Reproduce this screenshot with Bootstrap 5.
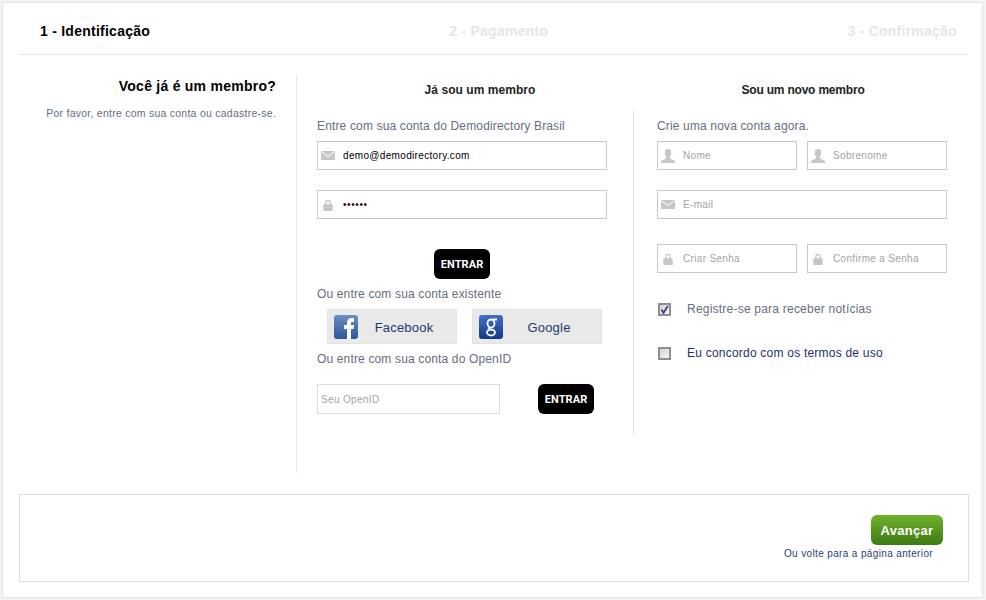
<!DOCTYPE html>
<html lang="pt-BR">
<head>
<meta charset="utf-8">
<title>Identificação</title>
<link href="https://cdn.jsdelivr.net/npm/bootstrap@5.3.0/dist/css/bootstrap.min.css" rel="stylesheet">
<style>
html,body{height:600px;overflow:hidden}
body{background:#f3f3f3;font-family:"Liberation Sans",Arial,sans-serif;font-size:12px;color:#666e80;padding:2px 3px 2px 2px}
.sheet{background:#fff;height:596px;padding:0 14px 0 15px;border:1px solid #e3e3e3}
.steps{height:52px;border-bottom:1px solid #e8e8e8;padding:18px 11px 0 22px;font-size:14px;font-weight:700;color:#e6e6e6;letter-spacing:.25px;line-height:20px}
.steps .on{color:#000}
.main-area{margin-top:20px;height:399px}
.intro{width:279px;border-right:1px solid #e8e8e8;padding:3px 20px 0 0;text-align:right}
.intro h1{font-size:14px;font-weight:700;color:#000;margin:0 0 11px;line-height:17px;letter-spacing:.25px}
.intro p{font-size:10.5px;margin:0;line-height:15px;letter-spacing:.25px}
.forms{padding-left:20px;flex:1}
.heads{height:36px;padding-top:8px;line-height:15px}
.heads h2{font-size:12px;font-weight:700;color:#222;margin:0;text-align:center}
.h-a{width:326px;letter-spacing:.05px}
.h-b{width:320px;margin-left:6px;letter-spacing:-.2px}
.pane-a{width:290px}
.pane-b{margin-left:26px;border-left:1px solid #e0e0e0;padding-left:23px;width:314px;height:323px}
.lead-t{line-height:14px;padding-top:8px;height:30px;letter-spacing:.15px;font-size:12px}
.fld{height:29px;border:1px solid #c8c8c8;background:#fff}
.fld svg{flex:none;margin-left:3px}
.fld .form-control{border:0;border-radius:0;padding:0 0 0 8px;height:27px;font-size:10px;font-family:"Liberation Sans",Arial,sans-serif;letter-spacing:.33px;color:#000;box-shadow:none;background:transparent}
.fld .form-control::placeholder{color:#a3a3a3;opacity:1}
.fld.dots .form-control{letter-spacing:.6px;color:#400010}
.half{width:140px}
.gap-x{gap:10px}
.btn-black{background:#000;color:#fff;border:0;border-radius:6px;width:56px;height:30px;padding:1px 0 0;font:700 11px/29px Roboto,sans-serif;letter-spacing:.1px}
.social{height:35px;width:130px;background:#e9e9e9;border:1px solid #e4e4e4;color:#1d3a6c;font-size:13px;letter-spacing:.2px;line-height:33px;padding:0 0 0 6px;text-decoration:none}
.social span{flex:1;text-align:center;padding:2px 6px 0 0}
.plain-t{line-height:14px;letter-spacing:.15px}
.openid{width:183px;height:30px;border:1px solid #ddd;border-radius:0;padding:0 3px;font-size:10px;font-family:"Liberation Sans",Arial,sans-serif;letter-spacing:.35px;box-shadow:none}
.openid::placeholder{color:#a3a3a3;opacity:1}
.chk{appearance:none;-webkit-appearance:none;width:13px;height:13px;margin:0 0 0 1px;border:2px solid #8e8e8e;background:linear-gradient(135deg,#d4d4d4,#f5f5f5);flex:none}
.chk:checked{background-image:url("data:image/svg+xml,%3Csvg xmlns='http://www.w3.org/2000/svg' viewBox='0 0 9 9'%3E%3Cpath d='M1.5 4.5 3.5 8 7.8 1' fill='none' stroke='%2338468c' stroke-width='1.8'/%3E%3C/svg%3E"),linear-gradient(135deg,#d4d4d4,#f5f5f5)}
.chk-row{height:14px;line-height:14px;letter-spacing:.22px;font-size:12px}
.chk-row label{margin:-1px 0 0 16px}
.chk-row .dark{color:#1f2f6e}
.bottom{height:88px;border:1px solid #ddd;margin:20px -1px 0 1px;padding:20px 25px 0 0}
.btn-go{background:linear-gradient(#6fb22e,#3e7a12);color:#fff;border:0;border-radius:6px;width:72px;height:30px;padding:1px 0 0;font-size:13px;font-weight:700;line-height:29px;letter-spacing:.3px;font-family:"Liberation Sans",Arial,sans-serif}
.back{font-size:10px;color:#1f3f7a;letter-spacing:.36px;line-height:14px;margin:2px 10px 0 0;text-decoration:none}
.mt-fld{margin-top:20px}
.btn-a{margin-top:30px}
.t-a{margin-top:8px}
.social-row{margin:8px 0 0 10px;gap:15px}
.t-b{margin-top:8px}
.row-o{margin-top:18px}
.me-btn{margin-right:13px}
.mt-pass{margin-top:25px}
.mt-c1{margin-top:29px}
.mt-c2{margin-top:30px}
</style>
</head>
<body>
<svg width="0" height="0" class="d-block" aria-hidden="true">
<defs>
<symbol id="i-mail" viewBox="0 0 14 9"><path d="M0 0h14L7 5z" fill="#c6c6c6"/><path d="M0 1 7 6.200 14 1v8H0z" fill="#c6c6c6"/></symbol>
<symbol id="i-lock" viewBox="0 0 14 14"><path d="M2.500 6h9a1 1 0 0 1 1 1v6a1 1 0 0 1-1 1h-9a1 1 0 0 1-1-1V7a1 1 0 0 1 1-1z" fill="#c6c6c6"/><path d="M4.500 7V4a2.500 2.500 0 0 1 5 0v3" fill="none" stroke="#c6c6c6" stroke-width="1.500"/></symbol>
<symbol id="i-user" viewBox="0 0 14 14"><ellipse cx="7" cy="4" rx="3.200" ry="4" fill="#c6c6c6"/><path d="M5.200 7.500h3.600l.4 2L14 12v2H0v-2l4.800-2.500z" fill="#c6c6c6"/></symbol>
<linearGradient id="g-f" x1="0" y1="0" x2="0" y2="1"><stop offset="0" stop-color="#6b8cc4"/><stop offset="1" stop-color="#30569a"/></linearGradient>
<linearGradient id="g-g" x1="0" y1="0" x2="0" y2="1"><stop offset="0" stop-color="#3f6fc8"/><stop offset="1" stop-color="#173a86"/></linearGradient>
</defs>
</svg>
<div class="sheet">
  <div class="steps d-flex justify-content-between">
    <span class="on">1 - Identificação</span>
    <span>2 - Pagamento</span>
    <span>3 - Confirmação</span>
  </div>
  <div class="main-area d-flex">
    <div class="intro">
      <h1>Você já é um membro?</h1>
      <p>Por favor, entre com sua conta ou cadastre-se.</p>
    </div>
    <div class="forms">
      <div class="heads d-flex">
        <h2 class="h-a">Já sou um membro</h2>
        <h2 class="h-b">Sou um novo membro</h2>
      </div>
      <div class="d-flex">
        <form class="pane-a">
          <div class="lead-t">Entre com sua conta do Demodirectory Brasil</div>
          <div class="fld d-flex align-items-center"><svg width="14" height="9"><use href="#i-mail"/></svg><input class="form-control" type="text" value="demo@demodirectory.com" aria-label="E-mail"></div>
          <div class="fld dots d-flex align-items-center mt-fld"><svg width="14" height="12"><use href="#i-lock"/></svg><input class="form-control" type="password" value="123456" aria-label="Senha"></div>
          <div class="text-center btn-a"><button type="button" class="btn btn-black">ENTRAR</button></div>
          <div class="plain-t t-a">Ou entre com sua conta existente</div>
          <div class="d-flex social-row">
            <a href="#" class="social d-flex align-items-center"><svg width="24" height="24" viewBox="0 0 24 24"><rect width="24" height="24" rx="3" fill="url(#g-f)"/><path d="M13 24V14h-3v-4h3V7.500C13 4.500 15 3 17.500 3H20v4h-1.800C17 7 17 7.700 17 8.500V10h3l-.5 4H17v10z" fill="#fff"/></svg><span>Facebook</span></a>
            <a href="#" class="social d-flex align-items-center"><svg width="24" height="24" viewBox="0 0 24 24"><rect width="24" height="24" rx="3" fill="url(#g-g)"/><g fill="none" stroke="#fff" stroke-width="1.800"><ellipse cx="12" cy="8.500" rx="3.500" ry="4"/><ellipse cx="12" cy="17.500" rx="4" ry="3"/><path d="M10 12.500 9.500 14.500M14 4.500h4"/></g></svg><span>Google</span></a>
          </div>
          <div class="plain-t t-b">Ou entre com sua conta do OpenID</div>
          <div class="d-flex justify-content-between row-o">
            <input class="form-control openid" type="text" placeholder="Seu OpenID" aria-label="Seu OpenID">
            <button type="button" class="btn btn-black me-btn">ENTRAR</button>
          </div>
        </form>
        <form class="pane-b">
          <div class="lead-t">Crie uma nova conta agora.</div>
          <div class="d-flex gap-x">
            <div class="fld half d-flex align-items-center"><svg width="14" height="14"><use href="#i-user"/></svg><input class="form-control" placeholder="Nome" aria-label="Nome"></div>
            <div class="fld half d-flex align-items-center"><svg width="14" height="14"><use href="#i-user"/></svg><input class="form-control" placeholder="Sobrenome" aria-label="Sobrenome"></div>
          </div>
          <div class="fld d-flex align-items-center mt-fld"><svg width="14" height="9"><use href="#i-mail"/></svg><input class="form-control" placeholder="E-mail" aria-label="E-mail"></div>
          <div class="d-flex gap-x mt-pass">
            <div class="fld half d-flex align-items-center"><svg width="14" height="12"><use href="#i-lock"/></svg><input class="form-control" placeholder="Criar Senha" aria-label="Criar Senha"></div>
            <div class="fld half d-flex align-items-center"><svg width="14" height="12"><use href="#i-lock"/></svg><input class="form-control" placeholder="Confirme a Senha" aria-label="Confirme a Senha"></div>
          </div>
          <div class="chk-row d-flex align-items-center mt-c1"><input class="chk" type="checkbox" id="c1" checked><label for="c1">Registre-se para receber notícias</label></div>
          <div class="chk-row d-flex align-items-center mt-c2"><input class="chk" type="checkbox" id="c2"><label for="c2" class="dark">Eu concordo com os termos de uso</label></div>
        </form>
      </div>
    </div>
  </div>
  <div class="bottom d-flex flex-column align-items-end">
    <button type="button" class="btn btn-go">Avançar</button>
    <a href="#" class="back">Ou volte para a página anterior</a>
  </div>
</div>
<script src="https://cdn.jsdelivr.net/npm/bootstrap@5.3.0/dist/js/bootstrap.bundle.min.js"></script>
</body>
</html>
